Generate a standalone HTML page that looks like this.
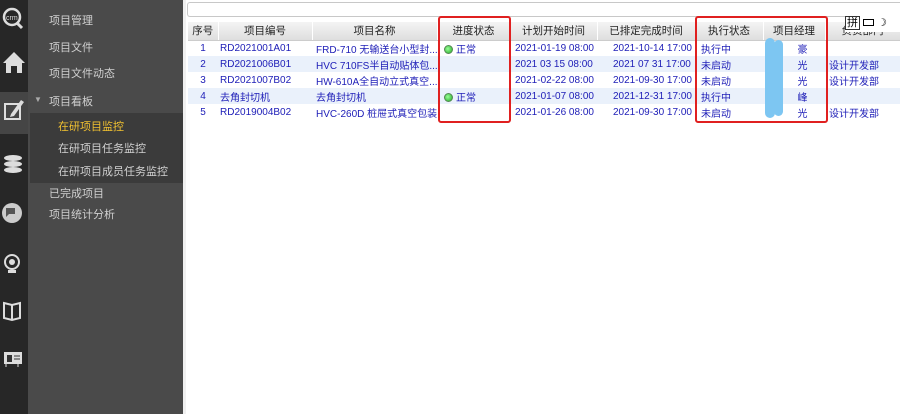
<!DOCTYPE html>
<html><head><meta charset="utf-8"><style>
*{margin:0;padding:0;box-sizing:border-box}
body{width:900px;height:414px;overflow:hidden;background:#fff;font-family:"Liberation Sans","Noto Sans CJK SC",sans-serif;font-size:11px;position:relative}
.bar{position:absolute;left:0;top:0;width:28px;height:414px;background:#272727}
.sel{position:absolute;left:0;top:92px;width:28px;height:42px;background:#454545}
.menu{position:absolute;left:28px;top:0;width:155px;height:414px;background:#4a4a4a;color:#d0d0d0}
.sub{position:absolute;left:2px;top:113px;width:153px;height:70px;background:#3b3b3b}
.mi{position:absolute;font-size:11px;white-space:nowrap}
.gap{position:absolute;left:183px;top:0;width:3px;height:414px;background:#f0f0f0}
.search{position:absolute;left:187px;top:2px;width:713px;height:15px;border:1px solid #c8c8c8;border-right:none;border-radius:3px 0 0 3px}
table{position:absolute;left:188px;top:22px;border-collapse:collapse;width:712px;table-layout:fixed}
td,th{height:16px;padding:0;white-space:nowrap;overflow:hidden;font-weight:normal;color:#2020b8;font-size:10px}
th{height:18px;background:linear-gradient(#f4f4f4,#dedede);color:#222;border-right:1px solid #fff;border-bottom:1px solid #ccc;font-size:10.5px}
td:nth-child(1){text-align:center}
td:nth-child(2){padding-left:32px}
td:nth-child(3){padding-left:4px}
td:nth-child(4){padding-left:7px}
td:nth-child(5){padding-left:5px}
td:nth-child(6){padding-left:16px}
td:nth-child(7){padding-left:6px}
td:nth-child(8){padding-left:4px}
td:nth-child(9){padding-left:4px}
td:nth-child(2){padding-left:2px}
tr.b td{background:#eaf1fb}
.dot{display:inline-block;width:9px;height:9px;border-radius:50%;background:radial-gradient(circle at 40% 40%,#9f9,#2a2);border:1px solid #585;vertical-align:-1px;margin-right:3px}
.red{position:absolute;border:2px solid #e02020;border-radius:3px}
.blur{position:absolute;background:#7dc6f2;border-radius:8px}
</style></head><body>
<div class="bar"></div><div class="sel"></div>
<svg style="position:absolute;left:0;top:0" width="28" height="414" fill="#ddd">
<circle cx="12" cy="17" r="8" fill="none" stroke="#ddd" stroke-width="2.5"/><line x1="17" y1="23" x2="22" y2="28" stroke="#ddd" stroke-width="3"/><text x="6" y="20" font-size="7" fill="#ddd">crm</text>
<path d="M3 63 L14 52 L25 63 L22 63 L22 73 L17 73 L17 66 L11 66 L11 73 L6 73 L6 63Z"/>
<rect x="5" y="104" width="15" height="15" fill="none" stroke="#ddd" stroke-width="2"/><path d="M11 114 L21 100 L24 102 L14 116 L10 117Z"/>
<ellipse cx="13" cy="158" rx="9" ry="3"/><ellipse cx="13" cy="164" rx="9" ry="3"/><ellipse cx="13" cy="170" rx="9" ry="3"/>
<circle cx="12" cy="213" r="10" fill="#ccc"/><path d="M6 208h9v6h-6l-3 3z" fill="#555"/>
<circle cx="12" cy="262" r="7" fill="none" stroke="#ddd" stroke-width="2"/><circle cx="12" cy="262" r="3"/><path d="M8 270h8v3h-8z"/>
<path d="M4 303 L12 305 L20 303 L20 318 L12 320 L4 318Z" fill="none" stroke="#ddd" stroke-width="2"/><line x1="12" y1="305" x2="12" y2="320" stroke="#ddd" stroke-width="2"/>
<rect x="4" y="352" width="18" height="12" fill="#ddd"/><rect x="7" y="355" width="5" height="7" fill="#333"/><path d="M14 356h6M14 359h6" stroke="#333"/><path d="M6 364v3M18 364v3" stroke="#ddd"/>
</svg>
<div class="menu"><div class="sub"></div>
<div class="mi" style="left:21px;top:12px">项目管理</div>
<div class="mi" style="left:21px;top:39px">项目文件</div>
<div class="mi" style="left:21px;top:65px">项目文件动态</div>
<div class="mi" style="left:6px;top:95px;font-size:8px;color:#aaa">▼</div>
<div class="mi" style="left:21px;top:93px">项目看板</div>
<div class="mi" style="left:30px;top:118px;color:#f0c030">在研项目监控</div>
<div class="mi" style="left:30px;top:140px">在研项目任务监控</div>
<div class="mi" style="left:30px;top:163px">在研项目成员任务监控</div>
<div class="mi" style="left:21px;top:185px">已完成项目</div>
<div class="mi" style="left:21px;top:206px">项目统计分析</div>
</div>
<div class="gap"></div>
<div class="search"></div>
<table>
<colgroup><col width="30"><col width="94"><col width="125"><col width="73"><col width="87"><col width="98"><col width="68"><col width="62"><col width="75"></colgroup>
<tr><th>序号</th><th>项目编号</th><th>项目名称</th><th>进度状态</th><th>计划开始时间</th><th>已排定完成时间</th><th>执行状态</th><th>项目经理</th><th>负责部门</th></tr>
<tr><td>1</td><td>RD2021001A01</td><td>FRD-710 无输送台小型封...</td><td><span class="dot"></span>正常</td><td>2021-01-19 08:00</td><td>2021-10-14 17:00</td><td>执行中</td><td>&nbsp;&nbsp;&nbsp;&nbsp;&nbsp;&nbsp;&nbsp;&nbsp;&nbsp;&nbsp;&nbsp;豪</td><td></td></tr>
<tr class="b"><td>2</td><td>RD2021006B01</td><td>HVC 710FS半自动贴体包...</td><td></td><td>2021 03 15 08:00</td><td>2021 07 31 17:00</td><td>未启动</td><td>&nbsp;&nbsp;&nbsp;&nbsp;&nbsp;&nbsp;&nbsp;&nbsp;&nbsp;&nbsp;&nbsp;光</td><td>设计开发部</td></tr>
<tr><td>3</td><td>RD2021007B02</td><td>HW-610A全自动立式真空...</td><td></td><td>2021-02-22 08:00</td><td>2021-09-30 17:00</td><td>未启动</td><td>&nbsp;&nbsp;&nbsp;&nbsp;&nbsp;&nbsp;&nbsp;&nbsp;&nbsp;&nbsp;&nbsp;光</td><td>设计开发部</td></tr>
<tr class="b"><td>4</td><td>去角封切机</td><td>去角封切机</td><td><span class="dot"></span>正常</td><td>2021-01-07 08:00</td><td>2021-12-31 17:00</td><td>执行中</td><td>&nbsp;&nbsp;&nbsp;&nbsp;&nbsp;&nbsp;&nbsp;&nbsp;&nbsp;&nbsp;&nbsp;峰</td><td></td></tr>
<tr><td>5</td><td>RD2019004B02</td><td>HVC-260D 桩屉式真空包装...</td><td></td><td>2021-01-26 08:00</td><td>2021-09-30 17:00</td><td>未启动</td><td>&nbsp;&nbsp;&nbsp;&nbsp;&nbsp;&nbsp;&nbsp;&nbsp;&nbsp;&nbsp;&nbsp;光</td><td>设计开发部</td></tr>
</table>
<div class="blur" style="left:765px;top:38px;width:10px;height:80px"></div>
<div class="blur" style="left:774px;top:40px;width:9px;height:76px"></div>
<div style="position:absolute;left:845px;top:14px;width:55px;height:18px;background:#fff;font-size:11px"><span style="border:1px solid #333;padding:0 1px">拼</span> <span style="display:inline-block;width:11px;height:7px;border:1px solid #000"></span> ☽</div>
<div class="red" style="left:438px;top:16px;width:73px;height:107px"></div>
<div class="red" style="left:695px;top:16px;width:133px;height:107px"></div>
</body></html>
